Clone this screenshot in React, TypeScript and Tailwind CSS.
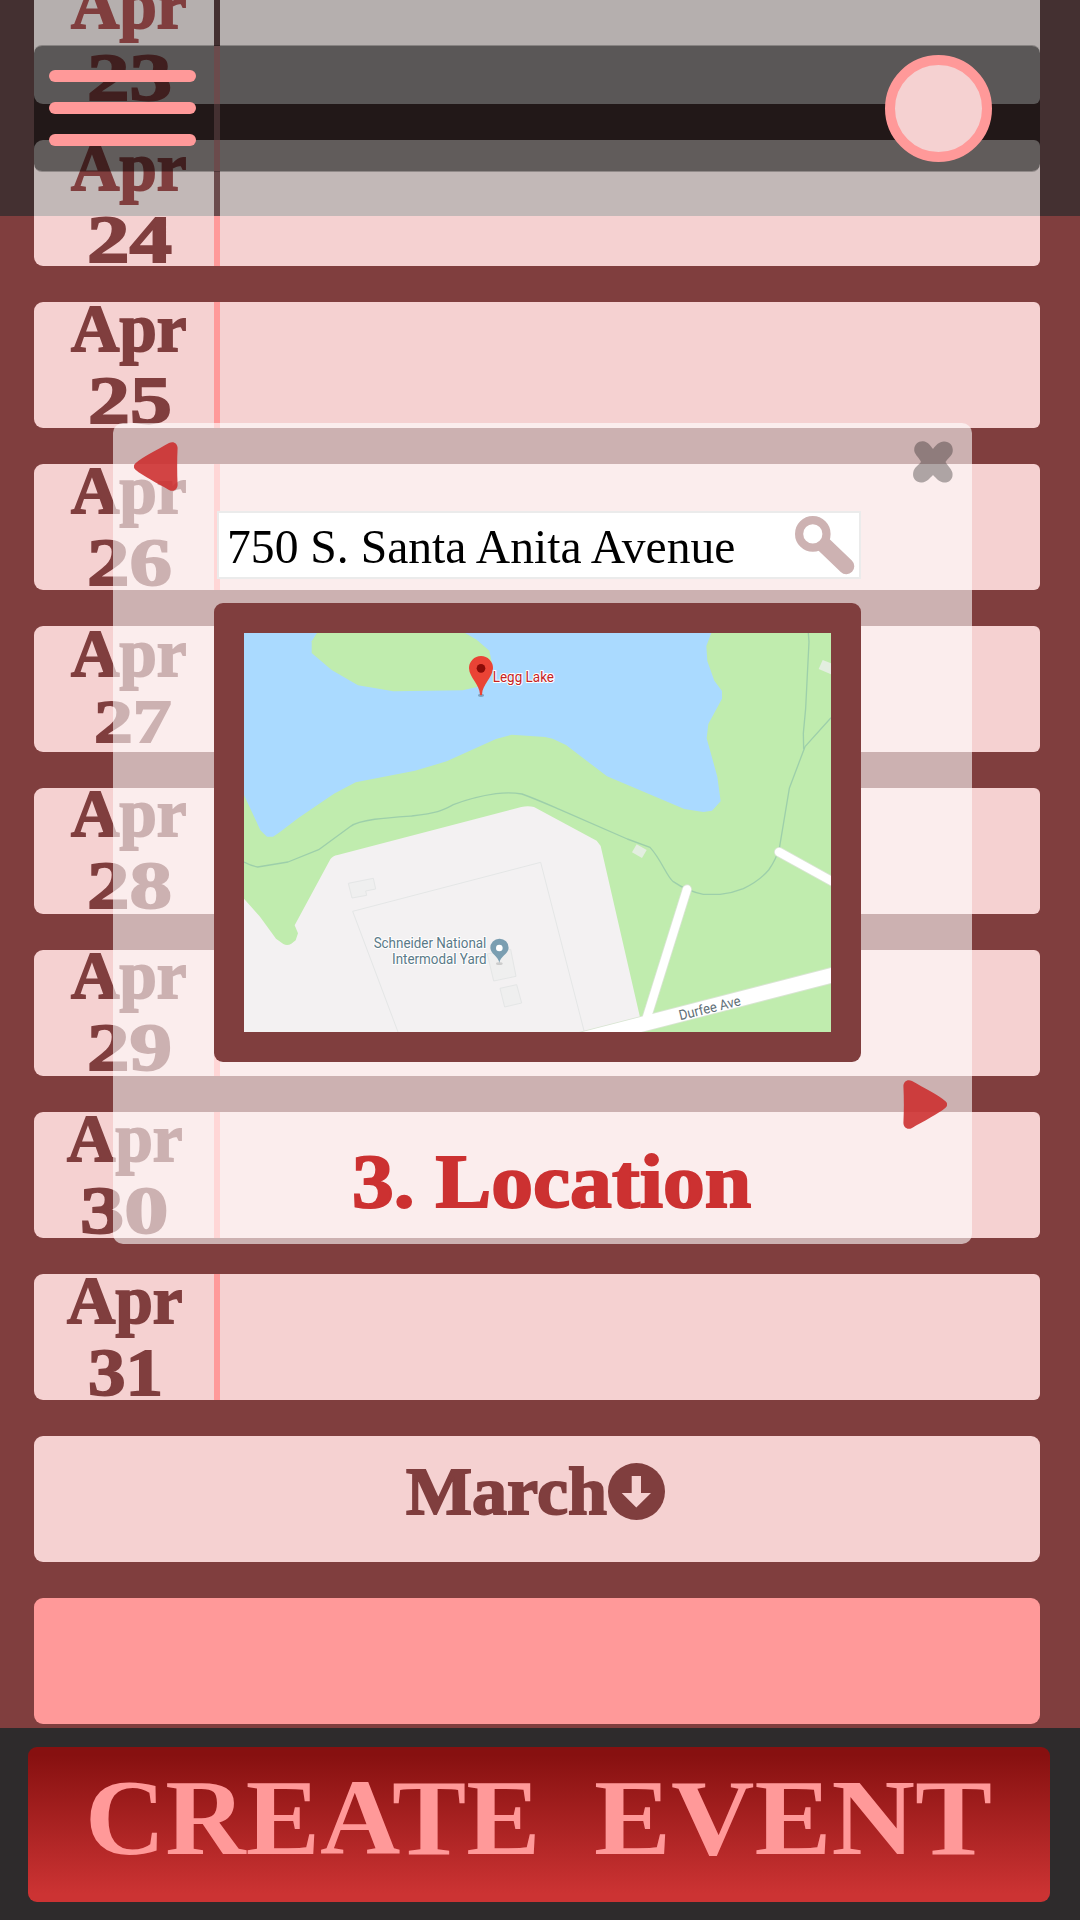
type Day = {
  month?: string;
  label?: string;
  cell: string;
  digits: string;
};

const serif = 'font-["Liberation_Serif",serif]';

const wide = "ml-[52px] text-[67px] scale-x-[1.27]";

const days: Day[] = [
  { label: "24", cell: "-mt-[9px] ml-px", digits: wide },
  { month: "Apr", label: "25", cell: "-mt-[10px] ml-px", digits: "ml-[53px] text-[67px] scale-x-[1.25]" },
  { month: "Apr", label: "26", cell: "-mt-[10px] ml-px", digits: wide },
  { month: "Apr", label: "27", cell: "-mt-[9px] ml-px", digits: "-mt-[4px] ml-[59px] text-[62px] scale-x-[1.25]" },
  { month: "Apr", label: "28", cell: "-mt-[11px] ml-px", digits: wide },
  { month: "Apr", label: "29", cell: "-mt-[11px] ml-px", digits: wide },
  { month: "Apr", label: "30", cell: "-mt-[10px] -ml-[3px]", digits: "ml-[49px] text-[67px] scale-x-[1.32]" },
  { month: "Apr", label: "31", cell: "-mt-[10px] -ml-[3px]", digits: "ml-[57px] text-[67px] scale-x-[1.12]" },
];

function DayRow({
  day,
  surface,
  divider,
}: {
  day: Day;
  surface: string;
  divider: string;
}) {
  return (
    <div className={`flex h-[126px] w-[1006px] shrink-0 rounded-l-[9px] rounded-r-[6px] ${surface}`}>
      <div className="w-[180px] shrink-0">
        <div
          className={`flex flex-col items-start font-bold leading-[72px] text-[#803e3e] [-webkit-text-stroke:1.8px_#803e3e] ${serif} ${day.cell}`}
        >
          <span className="ml-[36px] h-[72px] text-[67px]">{day.month}</span>
          <span className={`block h-[72px] origin-left ${day.digits}`}>{day.label}</span>
        </div>
      </div>
      <div className={`w-[6px] shrink-0 ${divider}`} />
    </div>
  );
}

function Header() {
  return (
    <header className="absolute inset-x-0 top-0 h-[216px] overflow-hidden bg-[#443031]">
      <div className="-mt-[22px] ml-[34px] flex flex-col gap-9">
        <DayRow
          day={{ month: "Apr", label: "23", cell: "-mt-[9px] ml-px", digits: wide }}
          surface="bg-[#b5afae]"
          divider="bg-[#443031]"
        />
        <DayRow
          day={{ month: "Apr", cell: "-mt-[9px] ml-px", digits: wide }}
          surface="bg-[#c2b8b7]"
          divider="bg-[#6b4b4c]"
        />
      </div>
      <div className="absolute left-[34px] top-[45px] flex h-[127px] w-[1006px] overflow-hidden rounded-[8px] border-y border-black/25 bg-black/50 bg-clip-padding">
        <div className="ml-[180px] flex w-[6px] flex-col">
          <div className="h-[58px] bg-[#6b4b4c]" />
          <div className="h-9 bg-[#443031]" />
          <div className="grow bg-[#6b4b4c]" />
        </div>
      </div>
      <div className="absolute inset-0 flex items-start justify-between pl-[49px] pr-[88px]">
        <button aria-label="Menu" className="mt-[70px] flex w-[147px] flex-col gap-5">
          <span className="h-3 rounded-full bg-[#ff9999]" />
          <span className="h-3 rounded-full bg-[#ff9999]" />
          <span className="h-3 rounded-full bg-[#ff9999]" />
        </button>
        <button
          aria-label="Profile"
          className="mt-[55px] size-[107px] rounded-full border-[10px] border-[#ff9999] bg-[#f5d1d1]"
        />
      </div>
    </header>
  );
}

function Arrow({ className }: { className: string }) {
  return (
    <svg viewBox="0 0 44 49" className={`h-[49px] w-[44px] ${className}`}>
      <path
        d="M1.5 21.2C9 14.8 23 8 35 1.1C39.5-1.2 43.4 1.4 43.6 6C43 18 43 31 43.6 43C43.4 47.6 39.5 50.2 35 47.9C23 41 9 34.2 1.5 27.8C-.7 26-.7 23 1.5 21.2Z"
        fill="#cc2c2c"
        fillOpacity=".88"
      />
    </svg>
  );
}

function LakeMap() {
  return (
    <svg viewBox="132 129 1761 1197" className="block h-[399px] w-[587px]">
      <rect x="132" y="129" width="1761" height="1197" fill="#c0ecae" />
      <path
        d="M132 129H1534L1519 168L1522 213L1543 272L1566 303V326L1525 402L1520 445L1552 560L1562 634L1536 662L1510 666L1453 657L1221 559L1098 465L1058 446L1035 441L935 434L888 447L740 514L645 542L467 577L402 611L295 684L247 721Q230 734 219 740H201L181 721L168 692L132 615Z"
        fill="#aadaff"
      />
      <path d="M351 129H795L830 149L868 182L876 220L860 280L835 290L788 301L580 304L474 286L395 240L335 189V154Z" fill="#c0ecae" />
      <path
        d="M132 926L180 980L228 1046L250 1062Q262 1068 274 1061L287 1051L294 1030L284 1006L391 808Q398 797 413 795L964 651Q984 646 1002 651L1190 752L1202 768L1320 1282L1150 1326H132Z"
        fill="#f3f1f2"
      />
      <g fill="none" stroke="#9dcfaa" strokeWidth="4" strokeLinejoin="round">
        <path d="M132 816Q155 828 173 831L264 816L356 779L450 710C480 688 560 683 635 678C720 667 725 662 760 644C820 621 860 615 888 611Q930 606 966 612C1010 628 1050 646 1080 659L1282 747L1350 772C1385 810 1400 860 1420 875Q1460 903 1510 913H1560Q1595 910 1630 896Q1678 873 1706 840Q1728 808 1738 775L1768 595L1815 470L1893 383" />
        <path d="M1825 129L1827 155L1817 355L1810 430L1811 478" />
      </g>
      <g fill="#efefef" stroke="#e4e6e6" strokeWidth="3">
        <path d="M445 880L520 865L527 897L497 903L500 916L456 924Z" />
        <path d="M862 1092L932 1078L948 1159L881 1173Z" />
        <path d="M900 1195L950 1184L965 1239L914 1251Z" />
        <path d="M594 1326L458 964L1022 817L1153 1326" fill="none" />
      </g>
      <g fill="#e3eee0">
        <path d="M1310 763L1340 780L1326 804L1296 787Z" />
        <path d="M1868 210L1893 220V253L1856 237Z" />
      </g>
      <g fill="none" strokeLinecap="round">
        <g stroke="#d9e5d3">
          <path d="M1461 898L1335 1300" strokeWidth="30" />
          <path d="M1737 786L1920 887" strokeWidth="30" />
          <path d="M1080 1366L1930 1147" strokeWidth="49" />
        </g>
        <g stroke="#ffffff">
          <path d="M1461 898L1335 1300" strokeWidth="25" />
          <path d="M1737 786L1920 887" strokeWidth="25" />
          <path d="M1080 1366L1930 1147" strokeWidth="44" />
        </g>
      </g>
      <ellipse cx="843" cy="316" rx="9" ry="5" fill="#668ba8" opacity=".7" />
      <path d="M843 198A36 36 0 0 0 807 235C808 263 839 283 840 314Q843 318 846 314C847 283 878 263 879 235A36 36 0 0 0 843 198Z" fill="#ea4335" />
      <circle cx="843" cy="235" r="13" fill="#8b0b07" />
      <ellipse cx="898" cy="1121" rx="10" ry="4" fill="#cccccc" />
      <path d="M898 1046A27 27 0 0 0 871 1074C872 1092 896 1100 898 1119C900 1100 925 1092 926 1074A27 27 0 0 0 898 1046Z" fill="#7a9eb1" />
      <circle cx="898" cy="1074" r="10" fill="#ffffff" />
      <g fontFamily="Roboto, sans-serif" fontSize="42" strokeWidth="6" strokeLinejoin="round" paintOrder="stroke">
        <text x="878" y="276" textLength="184" lengthAdjust="spacingAndGlyphs" fill="#c5221f" stroke="#ffffff">
          Legg Lake
        </text>
        <g fill="#5a7a88" stroke="#ffffff">
          <text x="521" y="1075" textLength="338" lengthAdjust="spacingAndGlyphs">
            Schneider National
          </text>
          <text x="576" y="1121" textLength="284" lengthAdjust="spacingAndGlyphs">
            Intermodal Yard
          </text>
        </g>
        <text
          x="1441"
          y="1291"
          textLength="189"
          lengthAdjust="spacingAndGlyphs"
          transform="rotate(-14 1441 1291)"
          fill="#5f6f77"
          stroke="#ffffff"
        >
          Durfee Ave
        </text>
      </g>
    </svg>
  );
}

function LocationDialog() {
  return (
    <section className="absolute left-[113px] top-[423px] flex h-[821px] w-[859px] flex-col rounded-[10px] bg-white/60">
      <div className="flex h-[88px] shrink-0 items-start justify-between pl-[21px] pr-[19px] pt-[18px]">
        <button aria-label="Previous step" className="pt-px">
          <Arrow className="block" />
        </button>
        <button aria-label="Close">
          <svg viewBox="0 0 40 42" className="block h-[42px] w-[40px]">
            <path
              d="M20 8C23 4 26 .8 31 .5C38 .4 41.5 7 39 13C37.500 16 34 18 32.500 21C34 24 38 27 39.200 31C41 37.500 36 42 31 41.500C26 41 23 37 20 34C17 37 14 41 9 41.500C2 42-1.500 36 .7 29.500C2 26 6 24 8 21C6.500 17 2 14 1.300 10C.5 4 5 0 10 .3C15 .6 17.500 5 20 8Z"
              fill="#1a1818"
              fillOpacity=".34"
            />
          </svg>
        </button>
      </div>
      <div className="ml-[104px] flex h-[68px] w-[644px] shrink-0 items-start justify-between border-2 border-[#ebebeb] bg-white">
        <span
          className={`ml-[8px] w-[530px] origin-left scale-x-[.972] whitespace-nowrap text-[49px] leading-[68px] text-black ${serif}`}
        >
          750 S. Santa Anita Avenue
        </span>
        <svg viewBox="0 0 60 59" className="mr-[4px] mt-[3px] h-[59px] w-[60px] shrink-0">
          <path d="M25 25L51.300 50.300" stroke="#cdb2b2" strokeWidth="16" strokeLinecap="round" />
          <circle cx="17.800" cy="17.900" r="13.700" fill="#ffffff" stroke="#cdb2b2" strokeWidth="8.200" />
        </svg>
      </div>
      <div className="ml-[101px] mt-6 h-[459px] w-[647px] shrink-0 rounded-[9px] bg-[#803e3e] p-[30px]">
        <LakeMap />
      </div>
      <button aria-label="Next step" className="mr-[25px] mt-[18px] self-end">
        <Arrow className="block rotate-180" />
      </button>
      <h2
        className={`ml-[239px] mt-[12px] w-[372px] origin-left scale-x-[1.085] whitespace-nowrap text-[77px] font-bold leading-[80px] text-[#cc3131] [-webkit-text-stroke:2px_#cc3131] ${serif}`}
      >
        3. Location
      </h2>
    </section>
  );
}

export default function App() {
  return (
    <main className="relative h-[1920px] w-[1080px] overflow-hidden bg-[#803e3e]">
      <div className="ml-[34px] flex flex-col gap-9 pt-[140px]">
        {days.map((day) => (
          <DayRow key={day.label} day={day} surface="bg-[#f5d1d1]" divider="bg-[#ff9999]" />
        ))}
        <div className="flex h-[126px] w-[1006px] rounded-[9px] bg-[#f5d1d1] pl-[372px] pt-[18px]">
          <span
            className={`w-[202px] origin-left scale-x-[1.045] text-[67px] font-bold leading-[74px] text-[#803e3e] [-webkit-text-stroke:1.8px_#803e3e] ${serif}`}
          >
            March
          </span>
          <svg viewBox="0 0 57 57" className="mt-[9px] size-[57px]">
            <circle cx="28.500" cy="28.500" r="28.500" fill="#803e3e" />
            <path d="M23.700 13H33V30H43L28.300 44.500L13.700 30H23.700Z" fill="#f5d1d1" />
          </svg>
        </div>
        <div className="h-[126px] w-[1006px] rounded-[9px] bg-[#ff9999]" />
      </div>
      <Header />
      <LocationDialog />
      <footer className="absolute inset-x-0 bottom-0 h-[192px] bg-[#2e2b2c] pl-[28px] pt-[19px]">
        <button
          className={`flex h-[155px] w-[1022px] rounded-[9px] bg-linear-to-b from-[#871010] from-5% to-[#cc3333] to-95% pl-[57px] text-left text-[107px] font-bold leading-[143px] text-[#ff9999] ${serif}`}
        >
          <span className="w-[509px] origin-left scale-x-[1.04]">CREATE</span>
          <span className="origin-left scale-x-[1.08]">EVENT</span>
        </button>
      </footer>
    </main>
  );
}
